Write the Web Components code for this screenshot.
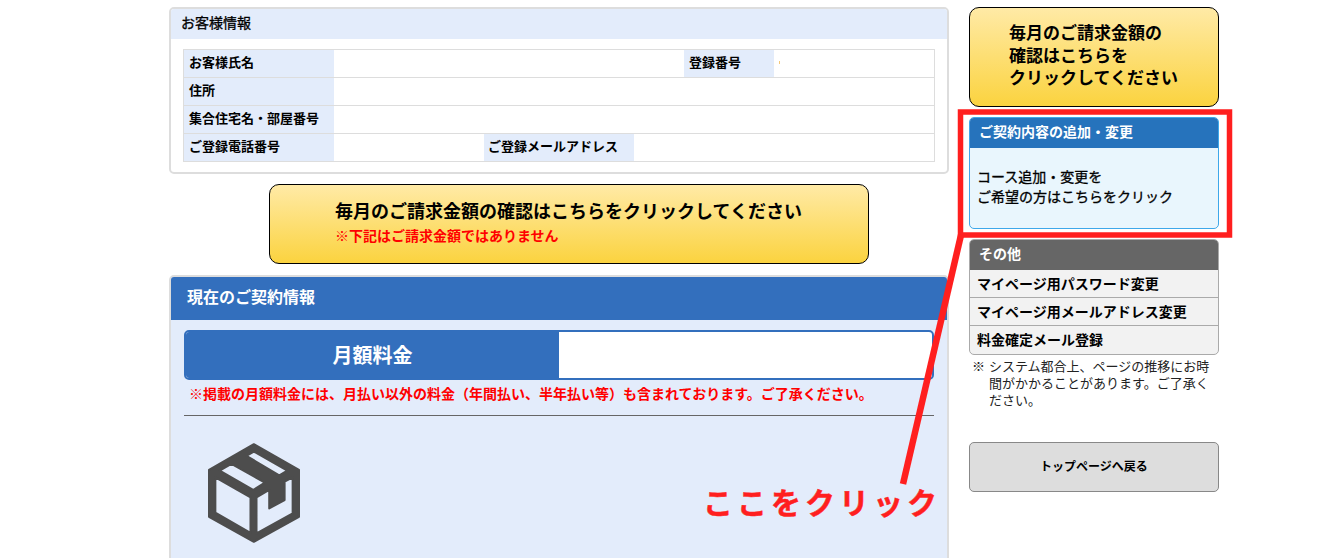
<!DOCTYPE html>
<html lang="ja">
<head>
<meta charset="utf-8">
<title>ご契約情報</title>
<style>
  html, body { margin: 0; height: 558px; overflow: hidden; background: #fff; }
  body {
    font-family: "Noto Sans CJK JP", "Liberation Sans", sans-serif;
    color: #000;
    position: relative;
  }
  #page { display: flex; gap: 20px; padding: 7px 0 0 169px; align-items: flex-start; }
  #main { width: 780px; flex: none; }
  #side { width: 250px; flex: none; }
</style>
</head>
<body>
  <div id="page">
    <div id="main">
      <customer-info></customer-info>
      <bill-banner></bill-banner>
      <contract-info></contract-info>
    </div>
    <div id="side">
      <side-bill></side-bill>
      <side-change></side-change>
      <side-menu></side-menu>
      <top-link></top-link>
    </div>
  </div>
  <click-callout></click-callout>

<script>
  function shadow(el, html) {
    el.attachShadow({ mode: "open" }).innerHTML = html;
  }

  class CustomerInfo extends HTMLElement {
    connectedCallback() {
      shadow(this, `
      <style>
        :host { display: block; box-sizing: border-box; height: 167px; border: 2px solid #ddd; border-radius: 5px; overflow: hidden; background: #fff; }
        h2 { margin: 0; height: 30px; padding-left: 10px; background: #e3ecfb; font-size: 14px; font-weight: 400; -webkit-text-stroke: 0.3px #000; line-height: 27px; }
        .tbl { margin: 10px 12px 0 12px; border: 1px solid #ddd; border-bottom: 0; font-size: 13px; font-weight: 700; }
        .row { display: flex; height: 28px; box-sizing: border-box; border-bottom: 1px solid #ddd; }
        .th { background: #e3ecfb; padding-left: 5px; line-height: 23px; box-sizing: border-box; flex: none; }
        .w150 { width: 150px; }
        .w90 { width: 90px; margin-left: 350px; }
        .mail { padding-left: 4px; }
        .gap { width: 150px; flex: none; }
        .dot { width: 1px; height: 3px; margin: 11px 0 0 5px; background: #f5c878; }
      </style>
      <h2>お客様情報</h2>
      <div class="tbl">
        <div class="row"><div class="th w150">お客様氏名</div><div class="th w90">登録番号</div><div class="dot"></div></div>
        <div class="row"><div class="th w150">住所</div></div>
        <div class="row"><div class="th w150">集合住宅名・部屋番号</div></div>
        <div class="row"><div class="th w150">ご登録電話番号</div><div class="gap"></div><div class="th w150 mail">ご登録メールアドレス</div></div>
      </div>`);
    }
  }

  class BillBanner extends HTMLElement {
    connectedCallback() {
      shadow(this, `
      <style>
        :host { display: block; box-sizing: border-box; width: 600px; height: 80px; margin: 10px 0 11px 100px; padding: 3px 0 0 65px; border: 1px solid #000; border-radius: 10px; background: linear-gradient(#ffeaa6, #fbd33f); }
        b { display: block; font-size: 18px; line-height: 44px; height: 36px; font-weight: 700; }
        span { display: block; color: #f00; font-size: 14px; font-weight: 700; line-height: 22px; }
      </style>
      <b>毎月のご請求金額の確認はこちらをクリックしてください</b>
      <span>※下記はご請求金額ではありません</span>`);
    }
  }

  class ContractInfo extends HTMLElement {
    connectedCallback() {
      shadow(this, `
      <style>
        :host { display: block; box-sizing: border-box; height: 300px; border: 2px solid #ddd; border-radius: 5px 5px 0 0; overflow: hidden; background: #e3ecfb; }
        h2 { margin: 0; height: 43px; padding-left: 16px; background: #336fbd; color: #fff; font-size: 16px; font-weight: 700; line-height: 39px; }
        .fee { display: flex; box-sizing: border-box; height: 50px; margin: 10px 13px 0 13px; border: 2px solid #336fbd; border-radius: 5px; background: #fff; overflow: hidden; }
        .fee b { width: 373px; background: #336fbd; color: #fff; font-size: 20px; line-height: 45px; text-align: center; }
        p { margin: 2px 0 0 18px; height: 26px; color: #f00; font-size: 14px; font-weight: 700; line-height: 22px; white-space: nowrap; }
        hr { margin: 7px 13px 0 13px; height: 1px; border: 0; background: #666; }
        svg { display: block; margin: 27px 0 0 37px; }
      </style>
      <h2>現在のご契約情報</h2>
      <div class="fee"><b>月額料金</b></div>
      <p>※掲載の月額料金には、月払い以外の料金（年間払い、半年払い等）も含まれております。ご了承ください。</p>
      <hr>
      <svg width="92" height="100" viewBox="0 0 275 298">
        <path fill="#4d4d4d" stroke="#4d4d4d" stroke-width="6" stroke-linejoin="round" fill-rule="evenodd" d="M137 3L272 80V220L137 295L3 220V80Z
          M22 102L127 162V268L22 208Z
          M145 162L183 140V195L229 170V115L253 102V210L145 270Z
          M70 62L170 118L135 140L35 82Z
          M137 25L237 82L213 96L115 38Z"/>
      </svg>`);
    }
  }

  class SideBill extends HTMLElement {
    connectedCallback() {
      shadow(this, `
      <style>
        :host { display: block; box-sizing: border-box; height: 100px; padding: 13px 0 0 39px; border: 1px solid #000; border-radius: 10px; background: linear-gradient(#ffeaa6, #fbd33f); font-size: 17px; font-weight: 700; line-height: 22.5px; }
      </style>
      毎月のご請求金額の<br>確認はこちらを<br>クリックしてください`);
    }
  }

  class SideChange extends HTMLElement {
    connectedCallback() {
      shadow(this, `
      <style>
        :host { display: block; box-sizing: border-box; height: 112px; margin-top: 10px; border: 1px solid #3ea8ea; border-radius: 5px; overflow: hidden; background: #e9f6fd; }
        h3 { margin: 0; height: 30px; padding-left: 9px; background: #2673bc; color: #fff; font-size: 14px; font-weight: 700; line-height: 26px; }
        p { margin: 18px 0 0 7px; font-size: 14px; font-weight: 400; -webkit-text-stroke: 0.3px #000; line-height: 20px; }
      </style>
      <h3>ご契約内容の追加・変更</h3>
      <p>コース追加・変更を<br>ご希望の方はこちらをクリック</p>`);
    }
  }

  class SideMenu extends HTMLElement {
    connectedCallback() {
      shadow(this, `
      <style>
        :host { display: block; margin-top: 10px; }
        .box { box-sizing: border-box; height: 116px; border: 1px solid #aaa; border-radius: 5px; overflow: hidden; background: #f2f2f2; }
        h3 { margin: 0; height: 30px; padding-left: 9px; background: #666; color: #fff; font-size: 14px; font-weight: 700; line-height: 26px; }
        a { display: block; box-sizing: border-box; height: 28px; padding-left: 7px; border-bottom: 1px solid #aaa; color: #000; font-size: 14px; font-weight: 700; line-height: 26px; }
        a:last-child { border-bottom: 0; }
        p { display: flex; margin: 2px 0 0 3px; width: 240px; font-size: 13px; line-height: 17px; color: #222; }
        i { font-style: normal; width: 17px; flex: none; }
      </style>
      <div class="box">
        <h3>その他</h3>
        <a>マイページ用パスワード変更</a>
        <a>マイページ用メールアドレス変更</a>
        <a>料金確定メール登録</a>
      </div>
      <p><i>※</i><span>システム都合上、ページの推移にお時間がかかることがあります。ご了承ください。</span></p>`);
    }
  }

  class TopLink extends HTMLElement {
    connectedCallback() {
      shadow(this, `
      <style>
        :host { display: block; box-sizing: border-box; height: 50px; margin-top: 34px; border: 1px solid #888; border-radius: 5px; background: #ddd; font-size: 12px; font-weight: 700; line-height: 45px; text-align: center; }
      </style>
      トップページへ戻る`);
    }
  }

  class ClickCallout extends HTMLElement {
    connectedCallback() {
      shadow(this, `
      <style>
        :host { position: absolute; left: 0; top: 0; width: 1330px; height: 558px; pointer-events: none; }
        svg { position: absolute; left: 0; top: 0; }
        span { position: absolute; left: 703px; top: 479px; color: #ff1f1f; font-size: 30px; font-weight: 700; -webkit-text-stroke: 0.5px #ff1f1f; line-height: 44px; letter-spacing: 4px; white-space: nowrap; }
      </style>
      <svg width="1330" height="558">
        <rect x="960.5" y="112" width="269" height="123" fill="none" stroke="#ff1f1f" stroke-width="5.5"/>
        <path d="M961 235L903 484" stroke="#ff1f1f" stroke-width="6.5" fill="none"/>
      </svg>
      <span>ここをクリック</span>`);
    }
  }

  customElements.define("customer-info", CustomerInfo);
  customElements.define("bill-banner", BillBanner);
  customElements.define("contract-info", ContractInfo);
  customElements.define("side-bill", SideBill);
  customElements.define("side-change", SideChange);
  customElements.define("side-menu", SideMenu);
  customElements.define("top-link", TopLink);
  customElements.define("click-callout", ClickCallout);
</script>
</body>
</html>
